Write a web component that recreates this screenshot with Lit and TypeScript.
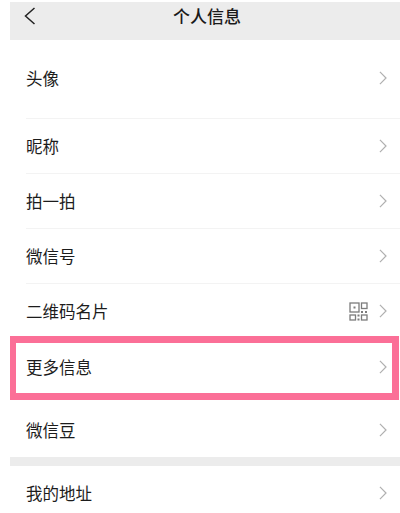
import { LitElement, html, css, svg } from "lit";
import { customElement } from "lit/decorators.js";

const chevron = html`<svg class="chev" viewBox="0 0 9 15" width="8.4" height="14"><path d="M1 1l6.5 6.5L1 14" fill="none" stroke="#b0b0b0" stroke-width="1.3"/></svg>`;

const qr = html`<svg class="qr" viewBox="0 0 19 19" width="19" height="19" fill="none" stroke="#7c7c7c" stroke-width="1.3">
  ${svg`<rect x="1" y="1" width="9" height="9"/><rect x="12.5" y="1" width="5.5" height="5.5"/><rect x="1" y="13" width="5.5" height="5"/><rect x="12.5" y="13" width="5.5" height="5"/>
  <rect x="4.5" y="4.5" width="2" height="2" fill="#7c7c7c" stroke="none"/><rect x="12" y="9" width="2" height="2" fill="#7c7c7c" stroke="none"/><rect x="16" y="9" width="2" height="2" fill="#7c7c7c" stroke="none"/>
  <rect x="8.5" y="12.5" width="2" height="2" fill="#7c7c7c" stroke="none"/><rect x="8.5" y="16.5" width="2" height="2" fill="#7c7c7c" stroke="none"/>`}
</svg>`;

@customElement("app-root")
export class AppRoot extends LitElement {
  static styles = css`
    :host {
      display: block;
      width: 400px;
      height: 513px;
      overflow: hidden;
      background: #fff;
      font-family: "Liberation Sans", "Noto Sans CJK SC", sans-serif;
      color: #1c1c1c;
      font-size: 16.5px;
    }
    .page { margin-left: 10px; padding-top: 2px; }
    .nav {
      background: #ececec;
      display: grid;
      grid-template-columns: 1fr auto 1fr;
      align-items: center;
      padding-left: 4px;
      padding-bottom: 10.5px;
      height: 27px;
    }
    .nav .title { font-size: 17px; color: #1a1a1a; font-weight: 500; }
    .back { margin-left: 10px; display: block; }
    .row {
      display: flex;
      align-items: center;
      padding-left: 16px;
      padding-right: 12.5px;
      height: 54.1px;
      box-sizing: border-box;
    }
    .row .label { flex: 1; }
    .row .qr { margin-right: 11px; }
    .avatar { height: 78.5px; padding-bottom: 1px; }
    .line { height: 1px; background: #f3f3f3; margin-left: 16px; }
    .hl {
      height: 64px;
      margin-top: -2.4px;
      margin-right: 1px;
      border: 7px solid #fb6f97;
      border-left-width: 6px;
      padding-left: 10px;
      padding-right: 4.5px;
      padding-bottom: 1px;
    }
    .after { height: 57px; padding-top: 4px; }
    .gap { height: 9px; background: #ececec; }
    .last { height: 56px; padding-bottom: 1px; }
  `;

  render() {
    return html`<div class="page">
      <div class="nav">
        <svg class="back" viewBox="0 0 12 18" width="12" height="18"><path d="M10.5 1L1.5 9l9 8" fill="none" stroke="#222" stroke-width="1.5"/></svg>
        <div class="title">个人信息</div>
        <div></div>
      </div>
      <div class="row avatar"><span class="label">头像</span>${chevron}</div>
      <div class="line"></div>
      <div class="row"><span class="label">昵称</span>${chevron}</div>
      <div class="line"></div>
      <div class="row"><span class="label">拍一拍</span>${chevron}</div>
      <div class="line"></div>
      <div class="row"><span class="label">微信号</span>${chevron}</div>
      <div class="line"></div>
      <div class="row"><span class="label">二维码名片</span>${qr}${chevron}</div>
      <div class="row hl"><span class="label">更多信息</span>${chevron}</div>
      <div class="row after"><span class="label">微信豆</span>${chevron}</div>
      <div class="gap"></div>
      <div class="row last"><span class="label">我的地址</span>${chevron}</div>
    </div>`;
  }
}
